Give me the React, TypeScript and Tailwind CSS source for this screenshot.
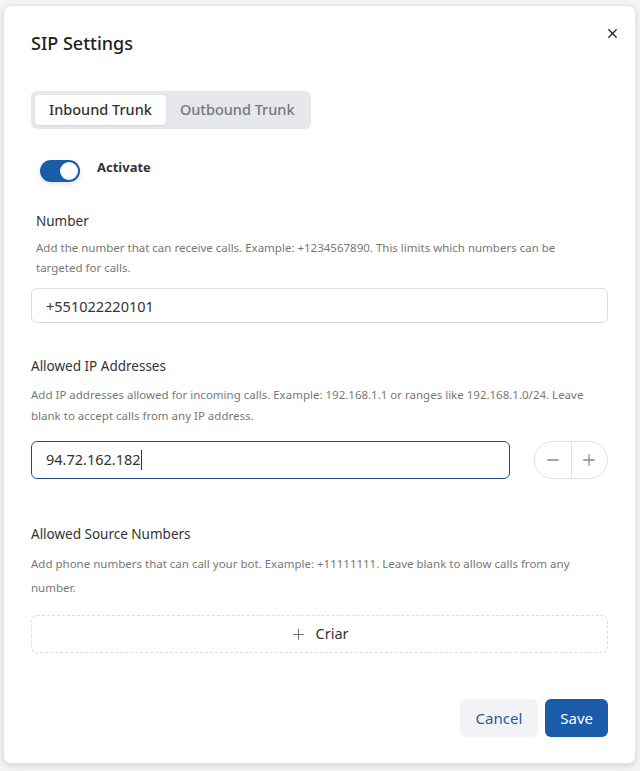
import React, { useState } from 'react';
import { X, Minus, Plus } from 'lucide-react';

const font = { fontFamily: '"Noto Sans", "Open Sans", sans-serif' };

function Field({ label, desc, children, lead }: { label: string; desc: string; children: React.ReactNode; lead: string }) {
  return (
    <div className="flex flex-col">
      <div className="text-[13.5px] text-[#333] leading-[20px]">{label}</div>
      <p className={`mt-[8px] text-[11.5px] text-[#777] ${lead}`}>{desc}</p>
      {children}
    </div>
  );
}

export default function App() {
  const [tab, setTab] = useState<'in' | 'out'>('in');
  const [active, setActive] = useState(true);

  return (
    <div className="w-[640px] h-[771px] bg-[#f3f4f5] pt-[5px] pl-[3px] pr-[4px]" style={font}>
      <div className="relative h-[759px] bg-white rounded-lg border border-[#e6e6e6] shadow-[0_2px_6px_rgba(0,0,0,0.12)] px-[27px] pt-[24px] flex flex-col">
        <button className="absolute right-[11px] top-[15px] w-6 h-6 flex items-center justify-center text-[#222]">
          <X className="w-[15px] h-[15px]" strokeWidth={2} />
        </button>

        <h2 className="text-[18px] font-medium text-[#222] leading-[26px]">SIP Settings</h2>

        {/* Tabs */}
        <div className="mt-[35px] self-start flex items-center gap-[2px] p-[4px] rounded-md bg-[#e5e7eb]">
          <button
            onClick={() => setTab('in')}
            className={`h-[30px] px-[14px] rounded-[4px] text-[14.5px] font-medium ${tab === 'in' ? 'bg-white text-[#333] shadow-[0_1px_2px_rgba(0,0,0,0.08)]' : 'text-[#777]'}`}
          >
            Inbound Trunk
          </button>
          <button
            onClick={() => setTab('out')}
            className={`h-[30px] px-[12px] rounded-[4px] text-[14.5px] font-medium ${tab === 'out' ? 'bg-white text-[#333]' : 'text-[#777]'}`}
          >
            Outbound Trunk
          </button>
        </div>

        {/* Activate */}
        <div className="mt-[30px] ml-[9px] flex items-start gap-[17px]">
          <button
            onClick={() => setActive(!active)}
            className={`mt-[1px] w-[40px] h-[22px] rounded-full flex items-center px-[2px] shadow-[0_2px_4px_rgba(0,0,0,0.12)] ${active ? 'bg-[#1a5ca8] justify-end' : 'bg-[#ccc] justify-start'}`}
          >
            <span className="w-[18px] h-[18px] rounded-full bg-white" />
          </button>
          <span className="text-[13px] font-bold text-[#333] leading-[16px]">Activate</span>
        </div>

        {/* Number */}
        <div className="mt-[29px] ml-[5px]">
          <div className="text-[13.5px] text-[#333]">Number</div>
          <p className="mt-[7px] text-[11.5px] leading-[20px] text-[#777] pr-10">
            Add the number that can receive calls. Example: +1234567890. This limits which numbers can be targeted for calls.
          </p>
        </div>
        <input
          defaultValue="+551022220101"
          className="mt-[10px] h-[35px] w-full rounded-md border border-[#dcdcdc] px-[14px] text-[14.5px] text-[#333] outline-none"
        />

        {/* Allowed IP */}
        <div className="mt-[33px]">
          <Field
            lead="leading-[21px]"
            label="Allowed IP Addresses"
            desc="Add IP addresses allowed for incoming calls. Example: 192.168.1.1 or ranges like 192.168.1.0/24. Leave blank to accept calls from any IP address."
          >
            <div className="mt-[15px] flex items-center gap-[24px]">
              <div className="flex-1 h-[38px] rounded-md border border-[#1e4f8c] px-[14px] flex items-center text-[14.5px] text-[#333]">
                94.72.162.182<span className="w-px h-[20px] bg-[#333]" />
              </div>
              <div className="w-[74px] h-[38px] rounded-full border border-[#e3e3e3] flex items-center">
                <button className="flex-1 h-full flex items-center justify-center text-[#888]">
                  <Minus className="w-[18px] h-[18px]" strokeWidth={1.7} />
                </button>
                <span className="w-px h-full bg-[#e3e3e3]" />
                <button className="flex-1 h-full flex items-center justify-center text-[#888]">
                  <Plus className="w-[18px] h-[18px]" strokeWidth={1.7} />
                </button>
              </div>
            </div>
          </Field>
        </div>

        {/* Allowed Source Numbers */}
        <div className="mt-[45px]">
          <Field
            lead="leading-[24px]"
            label="Allowed Source Numbers"
            desc="Add phone numbers that can call your bot. Example: +11111111. Leave blank to allow calls from any number."
          >
            <button className="mt-[15px] h-[38px] w-full rounded-md border border-dashed border-[#dedede] flex items-center justify-center gap-[8px] text-[14.5px] text-[#333]">
              <Plus className="w-[17px] h-[17px] text-[#777]" strokeWidth={1.6} />
              Criar
            </button>
          </Field>
        </div>

        {/* Footer */}
        <div className="mt-auto mb-[26px] flex justify-end gap-[7px]">
          <button className="h-[38px] px-[16px] rounded-md bg-[#f1f3f5] text-[15px] text-[#1a5ca8]">Cancel</button>
          <button className="h-[38px] px-[15px] rounded-md bg-[#1a5ca8] text-[15px] text-white">Save</button>
        </div>
      </div>
    </div>
  );
}
